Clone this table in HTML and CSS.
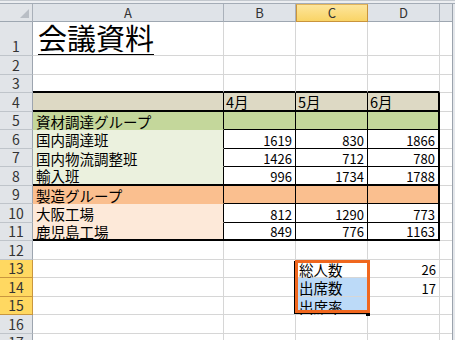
FILE: index.html
```html
<!DOCTYPE html>
<html lang="ja">
<head>
<meta charset="utf-8">
<link rel="stylesheet" href="styles.css">
</head>
<body>
<div class="window">
  <div class="topband"></div>
  <div class="main">
    <div class="stack">
      <div class="sheet">
        <div class="corner"><span class="tri"></span></div>
        <div class="ch">A</div><div class="ch">B</div><div class="ch sel">C</div><div class="ch">D</div><div class="ch ce"></div>

        <div class="rh">1</div><div class="c title"><span>会議資料</span></div><div class="c"></div><div class="c"></div><div class="c"></div><div class="c e"></div>
        <div class="rh">2</div><div class="c"></div><div class="c"></div><div class="c"></div><div class="c"></div><div class="c e"></div>
        <div class="rh">3</div><div class="c tt"></div><div class="c tt"></div><div class="c tt"></div><div class="c tt"></div><div class="c e"></div>

        <div class="rh">4</div><div class="c t hd bb2"></div><div class="c t hd bb2">4月</div><div class="c t hd bb2">5月</div><div class="c t hd bb2 rd">6月</div><div class="c e"></div>
        <div class="rh">5</div><div class="c t g1 nb">資材調達グループ</div><div class="c t g1"></div><div class="c t g1"></div><div class="c t g1 rd"></div><div class="c e"></div>
        <div class="rh">6</div><div class="c t g2 nb">国内調達班</div><div class="c t n">1619</div><div class="c t n">830</div><div class="c t n rd">1866</div><div class="c e"></div>
        <div class="rh">7</div><div class="c t g2 nb">国内物流調整班</div><div class="c t n">1426</div><div class="c t n">712</div><div class="c t n rd">780</div><div class="c e"></div>
        <div class="rh">8</div><div class="c t g2 bb2">輸入班</div><div class="c t n bb2">996</div><div class="c t n bb2">1734</div><div class="c t n bb2 rd">1788</div><div class="c e"></div>
        <div class="rh">9</div><div class="c t o1 nb">製造グループ</div><div class="c t o1"></div><div class="c t o1"></div><div class="c t o1 rd"></div><div class="c e"></div>
        <div class="rh">10</div><div class="c t o2 nb">大阪工場</div><div class="c t n">812</div><div class="c t n">1290</div><div class="c t n rd">773</div><div class="c e"></div>
        <div class="rh">11</div><div class="c t o2 bb2">鹿児島工場</div><div class="c t n bb2">849</div><div class="c t n bb2">776</div><div class="c t n bb2 rd">1163</div><div class="c e"></div>

        <div class="rh">12</div><div class="c"></div><div class="c"></div><div class="c"></div><div class="c"></div><div class="c e"></div>
        <div class="rh rs">13</div><div class="c"></div><div class="c"></div><div class="c">総人数</div><div class="c n">26</div><div class="c e"></div>
        <div class="rh rs">14</div><div class="c"></div><div class="c"></div><div class="c hl">出席数</div><div class="c n">17</div><div class="c e"></div>
        <div class="rh rs">15</div><div class="c"></div><div class="c"></div><div class="c hl">出席率</div><div class="c"></div><div class="c e"></div>
        <div class="rh">16</div><div class="c"></div><div class="c"></div><div class="c"></div><div class="c"></div><div class="c e"></div>
        <div class="rh">17</div><div class="c"></div><div class="c"></div><div class="c"></div><div class="c"></div><div class="c e"></div>
      </div>
      <div class="overlay">
        <div class="selbox"></div>
      </div>
    </div>
    <div class="vframe"></div>
  </div>
</div>
</body>
</html>
```

FILE: styles.css
```css
* { box-sizing: border-box; }
html, body { margin: 0; padding: 0; background: #fff; }
body { font-family: "Noto Sans CJK JP", "Noto Sans", sans-serif; color: #000; }

.window { width: 455px; height: 340px; overflow: hidden; background: #fff; }

.topband {
  height: 4px;
  background: #eceef1;
  border-top: 1px solid #c3c8ce;
  border-bottom: 1px solid #a4acb6;
}

.main { display: flex; }

.stack { display: grid; width: 452px; }
.sheet, .overlay {
  grid-area: 1 / 1;
  display: grid;
  grid-template-columns: 33px 191px 72px 72px 72px 12px;
  grid-template-rows: 18px 34px repeat(16, 18.5px);
}
.overlay { pointer-events: none; }

.vframe {
  width: 3px;
  background: #e4e7eb;
  border-left: 1px solid #9ba3ad;
}

/* headers */
.corner {
  background: #e1e4e8;
  border-right: 1px solid #a9b0b9;
  border-bottom: 1px solid #9ea7b1;
  position: relative;
}
.tri {
  position: absolute;
  right: 3px;
  bottom: 3px;
  width: 0; height: 0;
  border-left: 9px solid transparent;
  border-bottom: 9px solid #b9bec5;
}
.ch {
  background: #dfe3e8;
  border-right: 1px solid #aab1ba;
  border-bottom: 1px solid #9ea7b1;
  display: flex;
  align-items: center;
  justify-content: center;
  font-size: 13px;
  color: #333;
  line-height: 1;
  padding-bottom: 1px;
}
.ch.sel {
  background: linear-gradient(#fde59c, #f9d466);
  border: 1px solid #c9943c;
  border-top-color: #e2b45b;
}
.ch.ce { border-right: none; }

.rh {
  background: #e1e4e8;
  border-right: 1px solid #9da5af;
  border-bottom: 1px solid #bfc4ca;
  display: flex;
  align-items: flex-end;
  justify-content: center;
  font-size: 14px;
  line-height: 1;
  color: #333;
  padding-bottom: 2px;
}
.rh.rs {
  background: #ffd861;
  border-bottom-color: #c9963e;
  border-right-color: #c9963e;
}

/* cells */
.c {
  border-right: 1px solid #d6d6d6;
  border-bottom: 1px solid #d6d6d6;
  display: flex;
  align-items: flex-end;
  padding: 0 3px 0 3px;
  font-size: 14.5px;
  line-height: 1;
  white-space: nowrap;
}
.c.e { border-right: none; }
.c.n { justify-content: flex-end; font-size: 13px; padding-bottom: 1px; }

.title { padding-left: 5px; padding-bottom: 0; }
.title span {
  display: block;
  font-size: 29px;
  line-height: 1;
  padding-bottom: 2px;
  border-bottom: 1px solid #000;
}

.c.tt { border-bottom: 2px solid #000; }
.c.t { border-right: 1px solid #000; border-bottom: 1px solid #000; }
.c.rd { border-right: 2px solid #000; }
.c.bb2 { border-bottom: 2px solid #000; }
.c.nb { border-bottom-color: transparent; }

.hd { background: #ddd9c4; padding-left: 2px; }
.g1 { background: #c4d79b; }
.g2 { background: #ebf1de; }
.o1 { background: #fabf8f; }
.o2 { background: #fde9d9; }
.hl { background: #bcdaf8; }

/* selection frame */
.selbox {
  grid-column: 4;
  grid-row: 14 / span 3;
  margin: 0 -2px 2px -1px;
  border: 3px solid #f0671e;
  box-shadow: -1px 1px 0 #000;
  position: relative;
}
.selbox::after {
  content: "";
  position: absolute;
  right: -3px;
  top: calc(100% + 3px);
  width: 4px;
  height: 3px;
  background: #000;
}
```
